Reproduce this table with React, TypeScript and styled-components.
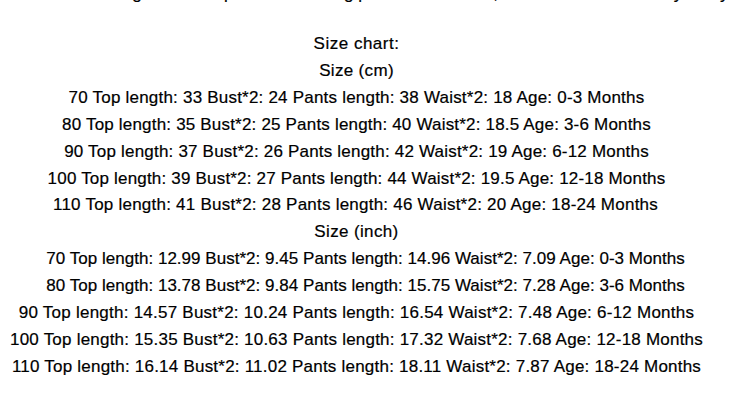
import React from "react";
import styled, { createGlobalStyle } from "styled-components";

const GlobalStyle = createGlobalStyle`
  html, body {
    margin: 0;
    padding: 0;
    background: #ffffff;
  }
  body {
    font-family: "Liberation Sans", Arial, sans-serif;
    color: #000000;
  }
`;

const Page = styled.div`
  width: 733px;
  height: 400px;
  overflow: hidden;
  background: #ffffff;
  display: flex;
  flex-direction: column;
`;

const ClippedLine = styled.div`
  margin-top: -20px;
  white-space: nowrap;
  font-size: 17px;
  line-height: 27px;
  overflow: hidden;
  -webkit-text-stroke: 0.2px #000;
`;

const Chart = styled.div`
  margin-top: 24px;
  padding-right: 20px;
  display: flex;
  flex-direction: column;
  align-items: center;
  font-size: 17px;
  line-height: 26.9px;
  white-space: nowrap;
  -webkit-text-stroke: 0.2px #000;
`;

const Heading = styled.div<{ $spacing: number }>`
  text-align: center;
  letter-spacing: ${(p) => p.$spacing}px;
`;

const Row = styled.div<{ $spacing: number; $shift: number }>`
  text-align: center;
  letter-spacing: ${(p) => p.$spacing}px;
  padding-left: ${(p) => Math.max(0, p.$shift * 2)}px;
  padding-right: ${(p) => Math.max(0, -p.$shift * 2)}px;
`;

type RowData = { text: string; spacing: number; shift: number };

const cmRows: RowData[] = [
  { text: "70 Top length: 33 Bust*2: 24 Pants length: 38 Waist*2: 18 Age: 0-3 Months", spacing: 0.21, shift: 0 },
  { text: "80 Top length: 35 Bust*2: 25 Pants length: 40 Waist*2: 18.5 Age: 3-6 Months", spacing: 0.19, shift: 0 },
  { text: "90 Top length: 37 Bust*2: 26 Pants length: 42 Waist*2: 19 Age: 6-12 Months", spacing: 0.2, shift: 0 },
  { text: "100 Top length: 39 Bust*2: 27 Pants length: 44 Waist*2: 19.5 Age: 12-18 Months", spacing: 0.19, shift: 0 },
  { text: "110 Top length: 41 Bust*2: 28 Pants length: 46 Waist*2: 20 Age: 18-24 Months", spacing: 0.23, shift: -1 },
];

const inchRows: RowData[] = [
  { text: "70 Top length: 12.99 Bust*2: 9.45 Pants length: 14.96 Waist*2: 7.09 Age: 0-3 Months", spacing: 0.03, shift: 9 },
  { text: "80 Top length: 13.78 Bust*2: 9.84 Pants length: 15.75 Waist*2: 7.28 Age: 3-6 Months", spacing: 0.03, shift: 9 },
  { text: "90 Top length: 14.57 Bust*2: 10.24 Pants length: 16.54 Waist*2: 7.48 Age: 6-12 Months", spacing: 0.24, shift: 0 },
  { text: "100 Top length: 15.35 Bust*2: 10.63 Pants length: 17.32 Waist*2: 7.68 Age: 12-18 Months", spacing: 0.22, shift: 0 },
  { text: "110 Top length: 16.14 Bust*2: 11.02 Pants length: 18.11 Waist*2: 7.87 Age: 18-24 Months", spacing: 0.22, shift: 0 },
];

export default function App() {
  return (
    <>
      <GlobalStyle />
      <Page>
        <ClippedLine>
          there will be a long time to ship and the last big parcel will be sent, so the total time is likely a day or two more than usual
        </ClippedLine>
        <Chart>
          <Heading $spacing={0.5}>Size chart:</Heading>
          <Heading $spacing={0.33}>Size (cm)</Heading>
          {cmRows.map((r) => (
            <Row key={r.text} $spacing={r.spacing} $shift={r.shift}>
              {r.text}
            </Row>
          ))}
          <Heading $spacing={0.36}>Size (inch)</Heading>
          {inchRows.map((r) => (
            <Row key={r.text} $spacing={r.spacing} $shift={r.shift}>
              {r.text}
            </Row>
          ))}
        </Chart>
      </Page>
    </>
  );
}
